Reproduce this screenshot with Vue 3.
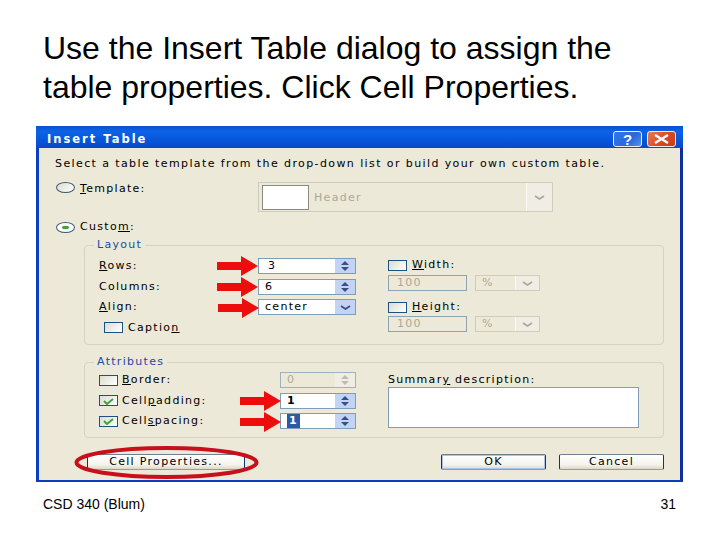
<script setup>
const arrows = [
  { x: 217, y: 266 },
  { x: 217, y: 287 },
  { x: 218, y: 308 },
  { x: 240, y: 401 },
  { x: 240, y: 422 },
]

// block arrow, x/y is the tail end on the centre line
function arrowPoints(a) {
  const { x, y } = a
  return `${x},${y - 4} ${x + 24},${y - 4} ${x + 24},${y - 10} ${x + 41},${y} ${x + 24},${y + 10} ${x + 24},${y + 4} ${x},${y + 4}`
}
</script>

<template>
  <div class="slide">
    <h1 class="heading">Use the Insert Table dialog to assign the<br />table properties. Click Cell Properties.</h1>

    <div class="dialog">
      <div class="titlebar">
        <span class="title">Insert Table</span>
        <span class="tb-btn help">?</span>
        <span class="tb-btn close">
          <svg width="17" height="10" viewBox="0 0 17 10"><path d="M2 1l13 8M15 1L2 9" stroke="#fff" stroke-width="2.4" fill="none" /></svg>
        </span>
      </div>

      <div class="body">
        <p class="intro">Select a table template from the drop-down list or build your own custom table.</p>

        <div class="template-row">
          <span class="radio"></span>
          <span class="lbl"><u>T</u>emplate:</span>
          <div class="template-combo">
            <span class="swatch"></span>
            <span class="muted">Header</span>
            <span class="combo-btn off"><svg width="11" height="5" viewBox="0 0 11 5"><path d="M1 1l4.5 3L10 1" stroke="#a9a89c" stroke-width="1.6" fill="none" /></svg></span>
          </div>
        </div>

        <div class="custom-row">
          <span class="radio on"></span>
          <span class="lbl">Custo<u>m</u>:</span>
        </div>

        <fieldset class="group layout">
          <legend>Layout</legend>
          <div class="col">
            <div class="row">
              <span class="lbl"><u>R</u>ows:</span>
              <span class="input"><i class="num">3</i><span class="spin"><b class="up"></b><b class="down"></b></span></span>
            </div>
            <div class="row">
              <span class="lbl">Columns:</span>
              <span class="input"><i>6</i><span class="spin"><b class="up"></b><b class="down"></b></span></span>
            </div>
            <div class="row">
              <span class="lbl"><u>A</u>lign:</span>
              <span class="input"><i>center</i><span class="spin chev"><svg width="11" height="5" viewBox="0 0 11 5"><path d="M1 1l4.5 3L10 1" stroke="#3a4f86" stroke-width="1.8" fill="none" /></svg></span></span>
            </div>
            <div class="row caption">
              <span class="check"></span>
              <span class="lbl">Captio<u>n</u></span>
            </div>
          </div>
          <div class="col right">
            <div class="size-head">
              <span class="check"></span>
              <span class="lbl"><u>W</u>idth:</span>
            </div>
            <div class="size-row">
              <span class="small-input muted">100</span>
              <span class="unit"><span class="muted">%</span><span class="combo-btn off"><svg width="11" height="5" viewBox="0 0 11 5"><path d="M1 1l4.5 3L10 1" stroke="#a9a89c" stroke-width="1.6" fill="none" /></svg></span></span>
            </div>
            <div class="size-head second">
              <span class="check"></span>
              <span class="lbl"><u>H</u>eight:</span>
            </div>
            <div class="size-row">
              <span class="small-input muted">100</span>
              <span class="unit"><span class="muted">%</span><span class="combo-btn off"><svg width="11" height="5" viewBox="0 0 11 5"><path d="M1 1l4.5 3L10 1" stroke="#a9a89c" stroke-width="1.6" fill="none" /></svg></span></span>
            </div>
          </div>
        </fieldset>

        <fieldset class="group attrs">
          <legend>Attributes</legend>
          <div class="col">
            <div class="row">
              <span class="check"></span>
              <span class="lbl"><u>B</u>order:</span>
              <span class="input short off"><i class="muted">0</i><span class="spin off"><b class="up"></b><b class="down"></b></span></span>
            </div>
            <div class="row">
              <span class="check"><svg width="13" height="8" viewBox="0 0 13 8"><path d="M2 4l3 3 6-5" stroke="#3fa33f" stroke-width="2" fill="none" /></svg></span>
              <span class="lbl">Cell<u>p</u>adding:</span>
              <span class="input short"><i class="val">1</i><span class="spin"><b class="up"></b><b class="down"></b></span></span>
            </div>
            <div class="row">
              <span class="check"><svg width="13" height="8" viewBox="0 0 13 8"><path d="M2 4l3 3 6-5" stroke="#3fa33f" stroke-width="2" fill="none" /></svg></span>
              <span class="lbl">Cell<u>s</u>pacing:</span>
              <span class="input short"><i class="val sel">1</i><span class="spin"><b class="up"></b><b class="down"></b></span></span>
            </div>
          </div>
          <div class="col right summary">
            <span class="lbl">Summar<u>y</u> description:</span>
            <span class="textarea"></span>
          </div>
        </fieldset>

        <div class="actions">
          <span class="btn cell">Cell Properties...</span>
          <span class="btn ok">OK</span>
          <span class="btn cancel">Cancel</span>
        </div>
      </div>
    </div>

    <div class="footer">
      <span>CSD 340 (Blum)</span>
      <span>31</span>
    </div>

    <svg class="marks" width="720" height="540" viewBox="0 0 720 540">
      <polygon v-for="(a, i) in arrows" :key="i" :points="arrowPoints(a)" fill="#ee0d0d" />
      <ellipse cx="166.5" cy="462.5" rx="90" ry="14.5" fill="none" stroke="#c8101c" stroke-width="4" />
    </svg>
  </div>
</template>

<style scoped>
.slide {
  position: relative;
  width: 720px;
  height: 540px;
  overflow: hidden;
  background: #fff;
  font-family: "Liberation Sans", Arial, sans-serif;
  color: #000;
}
.heading {
  margin: 0;
  padding: 29px 0 0 43px;
  height: 98px;
  box-sizing: border-box;
  font-size: 32px;
  line-height: 39px;
  font-weight: 400;
  white-space: nowrap;
}
.dialog {
  margin-left: 36px;
  width: 647px;
  height: 356px;
  margin-top: 28px;
  box-sizing: border-box;
  border: solid #0a3ec0;
  border-width: 0 3px 2px 3px;
  border-right-color: #0b2f9e;
  display: flex;
  flex-direction: column;
  font-family: "DejaVu Sans", sans-serif;
  font-size: 11px;
  letter-spacing: 1.3px;
}
.titlebar {
  height: 22px;
  box-sizing: border-box;
  flex: none;
  margin: 0 -3px;
  padding: 4px 7px 0 11px;
  display: flex;
  align-items: center;
  background: linear-gradient(#0a4fd0 0%, #0c63e8 25%, #0654d8 70%, #0a49c4 100%);
}
.title {
  flex: 1;
  color: #fff;
  font-weight: 700;
  font-size: 11.5px;
  letter-spacing: 2px;
}
.tb-btn {
  width: 29px;
  height: 16px;
  box-sizing: border-box;
  border: 1px solid #e8eefc;
  border-radius: 3px;
  display: flex;
  align-items: center;
  justify-content: center;
  color: #fff;
  letter-spacing: 0;
  font: 700 15px "Liberation Sans", sans-serif;
}
.help {
  background: linear-gradient(135deg, #2f78ea, #2a68d8 60%, #4f93f0);
  margin-right: 5px;
}
.close {
  background: linear-gradient(135deg, #e87a55, #d8481f 60%, #c93c16);
}
.body {
  flex: 1;
  background: #ece9d8;
  padding: 9px 16px 0 0;
}
.intro {
  margin: 0 0 0 16px;
  height: 14px;
  line-height: 14px;
  white-space: nowrap;
  letter-spacing: 1.4px;
}
.lbl {
  white-space: nowrap;
  line-height: 14px;
}
.muted {
  color: #aca899;
}
.template-row {
  margin-top: 11px;
  height: 30px;
  padding-left: 17px;
  display: flex;
  align-items: flex-start;
}
.template-row .radio {
  margin-top: 0;
}
.template-row .lbl {
  margin-left: 5px;
  width: 173px;
}
.radio {
  flex: none;
  width: 19px;
  height: 11px;
  box-sizing: border-box;
  margin-top: 1px;
  border: 1px solid #3d5a78;
  border-radius: 50%;
  background: linear-gradient(135deg, #dcdcd2, #fff);
}
.radio.on {
  background: radial-gradient(ellipse at center, #3fa33f 0 3px, #fff 4px);
}
.template-combo {
  width: 295px;
  height: 30px;
  margin-left: 5px;
  box-sizing: border-box;
  border: 1px solid #cfccbd;
  display: flex;
  align-items: center;
}
.swatch {
  width: 47px;
  height: 25px;
  margin-left: 3px;
  margin-right: 5px;
  box-sizing: border-box;
  border: 1px solid #8a8a80;
  background: #fff;
}
.template-combo .muted {
  flex: 1;
}
.template-combo .combo-btn {
  width: 25px;
  height: 28px;
}
.combo-btn {
  display: flex;
  align-items: center;
  justify-content: center;
  flex: none;
}
.combo-btn.off {
  background: #f0eee4;
  border-left: 1px solid #fbfaf5;
}
.custom-row {
  margin-top: 8px;
  height: 14px;
  padding-left: 17px;
  display: flex;
  align-items: center;
  gap: 5px;
}
.custom-row .radio {
  margin-top: 0;
}
.group {
  margin: 5px 0 0 45px;
  padding: 0 0 0 14px;
  box-sizing: border-box;
  border: 1px solid #d6d3c2;
  border-radius: 4px;
  display: grid;
  grid-template-columns: 257px 1fr;
  column-gap: 32px;
  min-width: 0;
}
.group legend {
  margin-left: -5px;
  padding: 0 3px;
  line-height: 12px;
  color: #1b4aa8;
}
.layout {
  height: 106px;
}
.attrs {
  height: 82px;
  margin-top: 11px;
}
.col {
  display: flex;
  flex-direction: column;
}
.layout .col:first-of-type {
  padding-top: 7px;
}
.attrs .col:first-of-type {
  padding-top: 4px;
}
.row {
  height: 16px;
  margin-bottom: 4.6px;
  display: flex;
  align-items: center;
}
.row .input {
  margin-left: auto;
}
.caption {
  padding-left: 5px;
  gap: 1px;
}
.input {
  width: 98px;
  height: 16px;
  box-sizing: border-box;
  border: 1px solid #7f9db9;
  background: #fff;
  display: flex;
  align-items: center;
  padding-left: 6px;
}
.input.short {
  width: 76px;
}
.input.off {
  background: #ece9d8;
  border-color: #9fb0be;
}
.input i {
  flex: 1;
  font-style: normal;
  line-height: 14px;
}
.input .num {
  padding-left: 3px;
}
.val {
  font-weight: 700;
}
.sel {
  flex: none !important;
  margin-right: auto;
  padding: 0 2px;
  background: #2a5aa8;
  color: #fff;
}
.spin {
  flex: none;
  width: 20px;
  height: 14px;
  background: #c3d3f3;
  display: flex;
  flex-direction: column;
  align-items: center;
  justify-content: center;
  gap: 2px;
}
.spin.off {
  background: #f0eee4;
}
.spin.chev {
  background: #c3d3f3;
}
.up,
.down {
  width: 0;
  height: 0;
  border-left: 4px solid transparent;
  border-right: 4px solid transparent;
}
.up {
  border-bottom: 4px solid #3a4f86;
}
.down {
  border-top: 4px solid #3a4f86;
}
.spin.off .up {
  border-bottom-color: #bdbbad;
}
.spin.off .down {
  border-top-color: #bdbbad;
}
.check {
  flex: none;
  width: 19px;
  height: 11px;
  margin-right: 4px;
  box-sizing: border-box;
  border: 1px solid #1c5180;
  background: linear-gradient(135deg, #dcdcd2, #fff);
  display: flex;
  align-items: center;
  justify-content: center;
}
.size-head {
  height: 14px;
  margin-top: 7px;
  display: flex;
  align-items: center;
}
.size-head .check {
  margin-right: 5px;
}
.size-head.second {
  margin-top: 9px;
  margin-bottom: -1px;
}
.size-row {
  display: flex;
  gap: 8px;
  margin-top: 3px;
}
.small-input {
  width: 79px;
  height: 16px;
  box-sizing: border-box;
  border: 1px solid #8fa2b2;
  padding-left: 8px;
  line-height: 14px;
}
.unit {
  width: 65px;
  height: 16px;
  box-sizing: border-box;
  border: 1px solid #cfccbd;
  padding-left: 6px;
  display: flex;
  align-items: center;
  justify-content: space-between;
  line-height: 14px;
}
.unit .combo-btn {
  width: 23px;
  height: 14px;
}
.summary {
  padding-top: 5px;
}
.textarea {
  display: block;
  width: 251px;
  height: 41px;
  margin-top: 0;
  box-sizing: border-box;
  border: 1px solid #7f9db9;
  background: #fff;
}
.actions {
  margin-top: 16px;
  padding-left: 48px;
  display: flex;
}
.btn {
  height: 16px;
  box-sizing: border-box;
  border: 1px solid;
  border-color: #6f7f8c #003c74 #a09c8c;
  border-radius: 2px;
  background: linear-gradient(#fff, #f4f3ec 70%, #dcd8c8);
  text-align: center;
  line-height: 14px;
}
.cell {
  width: 158px;
}
.ok {
  width: 105px;
  margin-left: 196px;
  box-shadow: inset 0 0 0 1px #a8c4ec;
}
.cancel {
  width: 105px;
  margin-left: 13px;
}
.footer {
  margin: 14px 44px 0 43px;
  display: flex;
  justify-content: space-between;
  font-size: 14px;
  line-height: 16px;
}
.marks {
  position: absolute;
  left: 0;
  top: 0;
  pointer-events: none;
}
</style>

<style>
body {
  margin: 0;
}
</style>
